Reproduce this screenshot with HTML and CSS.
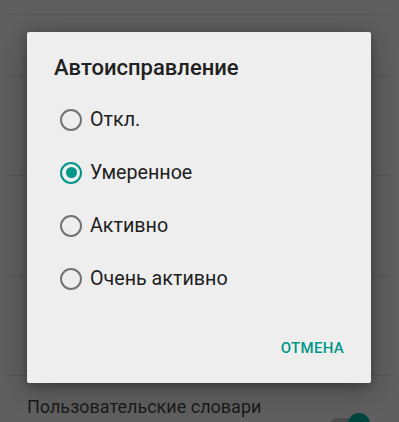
FILE: index.html
```html
<!DOCTYPE html>
<html lang="ru">
<head>
<meta charset="utf-8">
<link rel="stylesheet" href="styles.css">
</head>
<body>
<div class="screen">
  <div class="list">
    <div class="row row-top"></div>
    <div class="row row-a"></div>
    <div class="row row-b"></div>
    <div class="row row-b"></div>
    <div class="row row-b"></div>
    <div class="item-last">
      <div class="item-text">Пользовательские словари</div>
      <div class="switch"><span class="track"></span><span class="thumb"></span></div>
    </div>
  </div>

  <div class="dialog">
    <div class="dialog-title">Автоисправление</div>
    <div class="options">
      <div class="option"><span class="radio"></span><span class="label">Откл.</span></div>
      <div class="option"><span class="radio checked"></span><span class="label">Умеренное</span></div>
      <div class="option"><span class="radio"></span><span class="label">Активно</span></div>
      <div class="option"><span class="radio"></span><span class="label">Очень активно</span></div>
    </div>
    <div class="actions"><span class="btn">ОТМЕНА</span></div>
  </div>
</div>
</body>
</html>
```
FILE: styles.css
```css
html, body {
  margin: 0;
  padding: 0;
  background: #5f5f5f;
  overflow: hidden;
}
.screen {
  position: relative;
  width: 399px;
  height: 422px;
  overflow: hidden;
  background: #5f5f5f;
  font-family: Roboto, "Noto Sans", sans-serif;
}
.list {
  display: flex;
  flex-direction: column;
  padding: 0 9px 0 8px;
}
.row {
  border-bottom: 1px solid #555555;
}
.row-top { height: 14px; }
.row-a { height: 60px; }
.row-b { height: 99px; }
.item-last {
  display: flex;
  align-items: flex-start;
  justify-content: space-between;
  padding: 19px 20px 0 19px;
}
.item-text {
  font-size: 18px;
  line-height: 24px;
  color: #1a1a1a;
}
.switch {
  position: relative;
  width: 40px;
  height: 20px;
  margin-top: 18px;
}
.track {
  position: absolute;
  left: 0;
  top: 5px;
  width: 34px;
  height: 14px;
  border-radius: 7px;
  background: #4a4a4a;
}
.thumb {
  position: absolute;
  right: 0;
  top: 0;
  width: 22px;
  height: 22px;
  border-radius: 50%;
  background: #00463e;
}
.dialog {
  position: absolute;
  left: 27px;
  top: 32px;
  width: 344px;
  height: 351px;
  box-sizing: border-box;
  background: #eeeeee;
  border-radius: 2px;
  box-shadow: 0 6px 28px rgba(0, 0, 0, 0.3), 0 2px 8px rgba(0, 0, 0, 0.22);
  padding: 24px 27px 17px 27px;
  display: flex;
  flex-direction: column;
}
.dialog-title {
  font-size: 22px;
  line-height: 24px;
  font-weight: 500;
  color: #212121;
}
.options {
  margin-top: 13px;
  padding-left: 6px;
  display: flex;
  flex-direction: column;
}
.option {
  height: 53px;
  display: flex;
  align-items: center;
  gap: 8px;
}
.radio {
  width: 22px;
  height: 22px;
  box-sizing: border-box;
  border: 2.2px solid #737373;
  border-radius: 50%;
  display: flex;
  align-items: center;
  justify-content: center;
}
.radio.checked {
  border-color: #009688;
}
.radio.checked::after {
  content: "";
  width: 11px;
  height: 11px;
  border-radius: 50%;
  background: #009688;
}
.label {
  font-size: 19.7px;
  line-height: 24px;
  color: #1e1e1e;
}
.actions {
  margin-top: auto;
  display: flex;
  justify-content: flex-end;
}
.btn {
  font-size: 15px;
  line-height: 36px;
  font-weight: 500;
  color: #009688;
  letter-spacing: 0.3px;
}
```
